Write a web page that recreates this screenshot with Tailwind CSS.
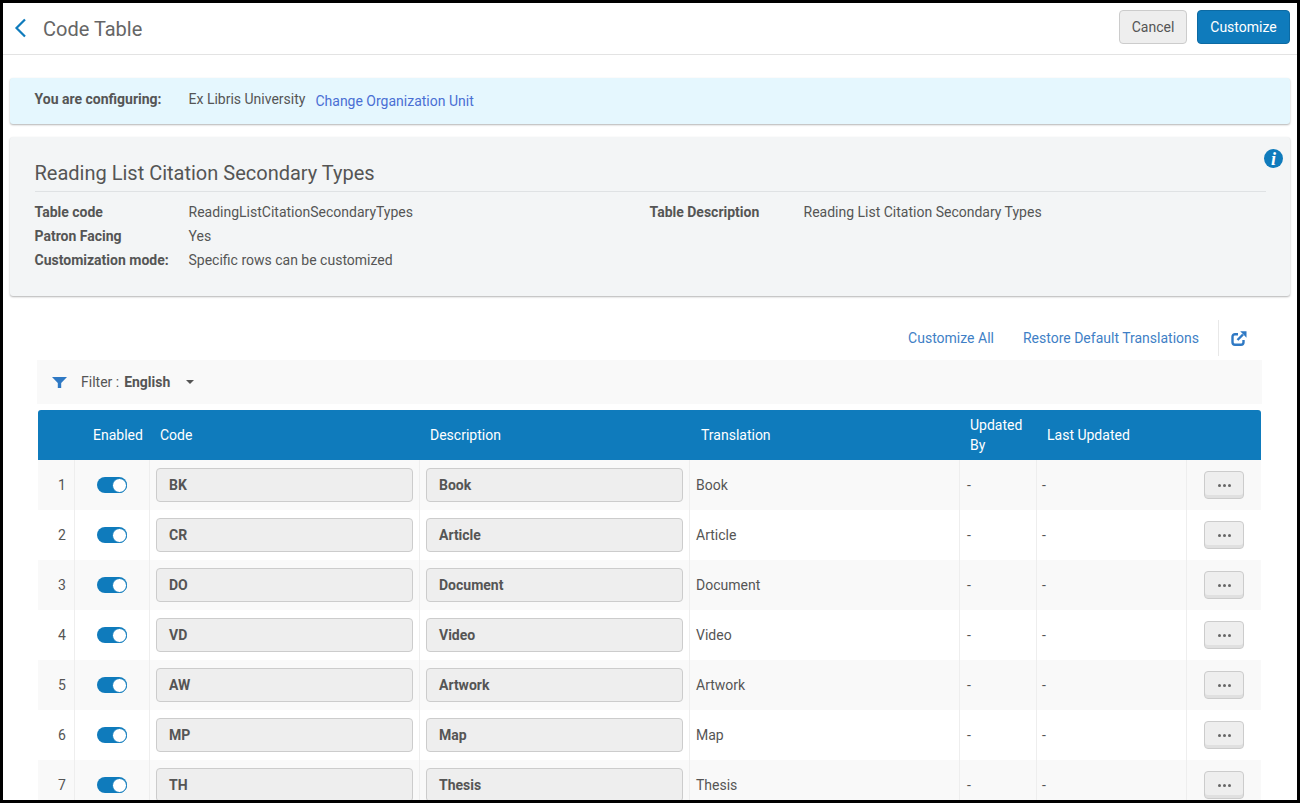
<!DOCTYPE html>
<html lang="en">
<head>
  <meta charset="UTF-8" />
  <title>Code Table</title>
  <script src="https://cdn.jsdelivr.net/npm/@tailwindcss/browser@4"></script>
</head>
<body class="bg-white font-['Roboto',sans-serif] text-[14px] text-[#555]">
  <div class="h-[803px] w-[1300px] overflow-hidden border-[3px] border-black bg-white">

    <!-- top bar -->
    <div class="flex h-[52px] items-center justify-between border-b border-[#e3e3e3] pr-[7px]">
      <div class="flex items-center">
        <svg class="-mt-[2px] ml-[11px] h-[20px] w-[14px]" viewBox="0 0 14 20" fill="none" stroke="#0f7bbc" stroke-width="2.2"><path d="M11 1.500 2.500 10 11 18.500"/></svg>
        <h1 class="ml-[15px] text-[20px] text-[#666]">Code Table</h1>
      </div>
      <div class="-mt-[3px] flex gap-[10px]">
        <button class="h-[34px] w-[68px] rounded-[4px] border border-[#ccc] bg-[#eee] text-[#555]">Cancel</button>
        <button class="h-[34px] w-[93px] rounded-[4px] border border-[#0c6aa3] bg-[#0f7bbc] text-white">Customize</button>
      </div>
    </div>

    <!-- org unit banner -->
    <div class="mx-[7px] mt-[23px] flex h-[46px] items-center rounded-[3px] bg-[#e5f7fe] pl-[24.5px] shadow-[0_1px_2px_rgba(0,0,0,0.3)]">
      <span class="-mt-[3px] w-[154px] font-bold">You are configuring:</span>
      <span class="-mt-[3px]">Ex Libris University</span>
      <a class="ml-[10px] text-[#4a6fd4]">Change Organization Unit</a>
    </div>

    <!-- table details -->
    <div class="relative mx-[7px] mt-[13px] h-[159px] rounded-[3px] bg-[#f3f5f6] px-[24.5px] shadow-[0_1px_2px_rgba(0,0,0,0.3)]">
      <span class="absolute right-[7px] top-[12px] flex h-[19px] w-[19px] items-center justify-center rounded-full bg-[#0f7bbc] font-['Liberation_Serif',serif] text-[18px] font-bold italic leading-none text-white">i</span>
      <h2 class="flex h-[55px] items-end border-b border-[#dfe2e4] pb-[4px] text-[20px] leading-[28px]">Reading List Citation Secondary Types</h2>
      <div class="mt-[8px] grid grid-cols-[154px_461px_154px_1fr] leading-[24px]">
        <span class="font-bold">Table code</span><span>ReadingListCitationSecondaryTypes</span>
        <span class="font-bold">Table Description</span><span>Reading List Citation Secondary Types</span>
        <span class="font-bold">Patron Facing</span><span class="col-span-3">Yes</span>
        <span class="font-bold">Customization mode:</span><span class="col-span-3">Specific rows can be customized</span>
      </div>
    </div>

    <!-- actions -->
    <div class="mt-[24px] flex h-[36px] items-center justify-end pr-[50px] text-[#3f7fc6]">
      <a>Customize All</a>
      <a class="ml-[29px]">Restore Default Translations</a>
      <span class="ml-[19px] h-[36px] border-l border-[#e8e8e8]"></span>
      <svg class="ml-[12px] h-[15px] w-[16px]" viewBox="0 0 16 15" fill="none" stroke="#2f79c4" stroke-width="2.400"><path d="M7 3.200H4A2.500 2.500 0 0 0 1.500 5.700v5.600A2.500 2.500 0 0 0 4 13.800h6a2.500 2.500 0 0 0 2.500-2.500V9"/><path d="M15.500 0.300V6.800L9.200 0.300z" fill="#2f79c4" stroke="none"/><path d="M12 3.500 6.500 9"/></svg>
    </div>

    <!-- filter -->
    <div class="mx-[34px] mt-[4px] flex h-[44px] w-[1225px] items-center bg-[#f9f9f9] pl-[15px]">
      <svg class="h-[11px] w-[15px]" viewBox="0 0 15 11" fill="#2f79c4"><path d="M0 0h15L9.200 6V11H5.800V6z"/></svg>
      <span class="ml-[14px]">Filter : <b class="ml-[1.500px]">English</b></span>
      <span class="ml-[16px] h-0 w-0 border-x-[4px] border-t-[4px] border-x-transparent border-t-[#555]"></span>
    </div>

    <!-- code table -->
    <div class="ml-[35px] mt-[6px] w-[1223px]">
      <div class="grid h-[50px] grid-cols-[37px_75px_270px_270px_270px_77px_150px_74px] items-center rounded-t-[3px] bg-[#0f7bbc] text-white">
        <span></span>
        <span class="pl-[18px]">Enabled</span>
        <span class="pl-[10px]">Code</span>
        <span class="pl-[10px]">Description</span>
        <span class="pl-[11px]">Translation</span>
        <span class="pl-[10px] leading-[20px]">Updated By</span>
        <span class="pl-[10px]">Last Updated</span>
        <span></span>
      </div>

      <div class="grid h-[50px] grid-cols-[37px_75px_270px_270px_270px_77px_150px_74px] items-stretch bg-[#f9f9f9]">
        <span class="flex items-center justify-center border-r border-[#eee] pl-[12px]">1</span>
        <span class="flex items-center justify-center border-r border-[#eee]"><span class="flex h-[16px] w-[30px] items-center justify-end rounded-full bg-[#0f7bbc]"><span class="box-content h-[13px] w-[13px] rounded-full border border-[#0f7bbc] bg-white"></span></span></span>
        <span class="flex items-center border-r border-[#eee] pl-[6px]"><span class="flex h-[34px] w-[257px] items-center rounded-[4px] border border-[#ccc] bg-[#eee] pl-[12px] font-bold">BK</span></span>
        <span class="flex items-center border-r border-[#eee] pl-[6px]"><span class="flex h-[34px] w-[257px] items-center rounded-[4px] border border-[#ccc] bg-[#eee] pl-[12px] font-bold">Book</span></span>
        <span class="flex items-center border-r border-[#eee] pl-[6px]">Book</span>
        <span class="flex items-center border-r border-[#eee] pl-[7px]">-</span>
        <span class="flex items-center border-r border-[#eee] pl-[5px]">-</span>
        <span class="flex items-center pl-[17px]"><button class="flex h-[28px] w-[40px] items-center justify-center gap-[2px] rounded-[4px] border border-[#ccc] bg-[#eee] pt-[1px] shadow-[inset_0_-3px_0_#e0e0e0]"><i class="h-[3px] w-[3px] rounded-full bg-[#666]"></i><i class="h-[3px] w-[3px] rounded-full bg-[#666]"></i><i class="h-[3px] w-[3px] rounded-full bg-[#666]"></i></button></span>
      </div>

      <div class="grid h-[50px] grid-cols-[37px_75px_270px_270px_270px_77px_150px_74px] items-stretch bg-white">
        <span class="flex items-center justify-center border-r border-[#eee] pl-[12px]">2</span>
        <span class="flex items-center justify-center border-r border-[#eee]"><span class="flex h-[16px] w-[30px] items-center justify-end rounded-full bg-[#0f7bbc]"><span class="box-content h-[13px] w-[13px] rounded-full border border-[#0f7bbc] bg-white"></span></span></span>
        <span class="flex items-center border-r border-[#eee] pl-[6px]"><span class="flex h-[34px] w-[257px] items-center rounded-[4px] border border-[#ccc] bg-[#eee] pl-[12px] font-bold">CR</span></span>
        <span class="flex items-center border-r border-[#eee] pl-[6px]"><span class="flex h-[34px] w-[257px] items-center rounded-[4px] border border-[#ccc] bg-[#eee] pl-[12px] font-bold">Article</span></span>
        <span class="flex items-center border-r border-[#eee] pl-[6px]">Article</span>
        <span class="flex items-center border-r border-[#eee] pl-[7px]">-</span>
        <span class="flex items-center border-r border-[#eee] pl-[5px]">-</span>
        <span class="flex items-center pl-[17px]"><button class="flex h-[28px] w-[40px] items-center justify-center gap-[2px] rounded-[4px] border border-[#ccc] bg-[#eee] pt-[1px] shadow-[inset_0_-3px_0_#e0e0e0]"><i class="h-[3px] w-[3px] rounded-full bg-[#666]"></i><i class="h-[3px] w-[3px] rounded-full bg-[#666]"></i><i class="h-[3px] w-[3px] rounded-full bg-[#666]"></i></button></span>
      </div>

      <div class="grid h-[50px] grid-cols-[37px_75px_270px_270px_270px_77px_150px_74px] items-stretch bg-[#f9f9f9]">
        <span class="flex items-center justify-center border-r border-[#eee] pl-[12px]">3</span>
        <span class="flex items-center justify-center border-r border-[#eee]"><span class="flex h-[16px] w-[30px] items-center justify-end rounded-full bg-[#0f7bbc]"><span class="box-content h-[13px] w-[13px] rounded-full border border-[#0f7bbc] bg-white"></span></span></span>
        <span class="flex items-center border-r border-[#eee] pl-[6px]"><span class="flex h-[34px] w-[257px] items-center rounded-[4px] border border-[#ccc] bg-[#eee] pl-[12px] font-bold">DO</span></span>
        <span class="flex items-center border-r border-[#eee] pl-[6px]"><span class="flex h-[34px] w-[257px] items-center rounded-[4px] border border-[#ccc] bg-[#eee] pl-[12px] font-bold">Document</span></span>
        <span class="flex items-center border-r border-[#eee] pl-[6px]">Document</span>
        <span class="flex items-center border-r border-[#eee] pl-[7px]">-</span>
        <span class="flex items-center border-r border-[#eee] pl-[5px]">-</span>
        <span class="flex items-center pl-[17px]"><button class="flex h-[28px] w-[40px] items-center justify-center gap-[2px] rounded-[4px] border border-[#ccc] bg-[#eee] pt-[1px] shadow-[inset_0_-3px_0_#e0e0e0]"><i class="h-[3px] w-[3px] rounded-full bg-[#666]"></i><i class="h-[3px] w-[3px] rounded-full bg-[#666]"></i><i class="h-[3px] w-[3px] rounded-full bg-[#666]"></i></button></span>
      </div>

      <div class="grid h-[50px] grid-cols-[37px_75px_270px_270px_270px_77px_150px_74px] items-stretch bg-white">
        <span class="flex items-center justify-center border-r border-[#eee] pl-[12px]">4</span>
        <span class="flex items-center justify-center border-r border-[#eee]"><span class="flex h-[16px] w-[30px] items-center justify-end rounded-full bg-[#0f7bbc]"><span class="box-content h-[13px] w-[13px] rounded-full border border-[#0f7bbc] bg-white"></span></span></span>
        <span class="flex items-center border-r border-[#eee] pl-[6px]"><span class="flex h-[34px] w-[257px] items-center rounded-[4px] border border-[#ccc] bg-[#eee] pl-[12px] font-bold">VD</span></span>
        <span class="flex items-center border-r border-[#eee] pl-[6px]"><span class="flex h-[34px] w-[257px] items-center rounded-[4px] border border-[#ccc] bg-[#eee] pl-[12px] font-bold">Video</span></span>
        <span class="flex items-center border-r border-[#eee] pl-[6px]">Video</span>
        <span class="flex items-center border-r border-[#eee] pl-[7px]">-</span>
        <span class="flex items-center border-r border-[#eee] pl-[5px]">-</span>
        <span class="flex items-center pl-[17px]"><button class="flex h-[28px] w-[40px] items-center justify-center gap-[2px] rounded-[4px] border border-[#ccc] bg-[#eee] pt-[1px] shadow-[inset_0_-3px_0_#e0e0e0]"><i class="h-[3px] w-[3px] rounded-full bg-[#666]"></i><i class="h-[3px] w-[3px] rounded-full bg-[#666]"></i><i class="h-[3px] w-[3px] rounded-full bg-[#666]"></i></button></span>
      </div>

      <div class="grid h-[50px] grid-cols-[37px_75px_270px_270px_270px_77px_150px_74px] items-stretch bg-[#f9f9f9]">
        <span class="flex items-center justify-center border-r border-[#eee] pl-[12px]">5</span>
        <span class="flex items-center justify-center border-r border-[#eee]"><span class="flex h-[16px] w-[30px] items-center justify-end rounded-full bg-[#0f7bbc]"><span class="box-content h-[13px] w-[13px] rounded-full border border-[#0f7bbc] bg-white"></span></span></span>
        <span class="flex items-center border-r border-[#eee] pl-[6px]"><span class="flex h-[34px] w-[257px] items-center rounded-[4px] border border-[#ccc] bg-[#eee] pl-[12px] font-bold">AW</span></span>
        <span class="flex items-center border-r border-[#eee] pl-[6px]"><span class="flex h-[34px] w-[257px] items-center rounded-[4px] border border-[#ccc] bg-[#eee] pl-[12px] font-bold">Artwork</span></span>
        <span class="flex items-center border-r border-[#eee] pl-[6px]">Artwork</span>
        <span class="flex items-center border-r border-[#eee] pl-[7px]">-</span>
        <span class="flex items-center border-r border-[#eee] pl-[5px]">-</span>
        <span class="flex items-center pl-[17px]"><button class="flex h-[28px] w-[40px] items-center justify-center gap-[2px] rounded-[4px] border border-[#ccc] bg-[#eee] pt-[1px] shadow-[inset_0_-3px_0_#e0e0e0]"><i class="h-[3px] w-[3px] rounded-full bg-[#666]"></i><i class="h-[3px] w-[3px] rounded-full bg-[#666]"></i><i class="h-[3px] w-[3px] rounded-full bg-[#666]"></i></button></span>
      </div>

      <div class="grid h-[50px] grid-cols-[37px_75px_270px_270px_270px_77px_150px_74px] items-stretch bg-white">
        <span class="flex items-center justify-center border-r border-[#eee] pl-[12px]">6</span>
        <span class="flex items-center justify-center border-r border-[#eee]"><span class="flex h-[16px] w-[30px] items-center justify-end rounded-full bg-[#0f7bbc]"><span class="box-content h-[13px] w-[13px] rounded-full border border-[#0f7bbc] bg-white"></span></span></span>
        <span class="flex items-center border-r border-[#eee] pl-[6px]"><span class="flex h-[34px] w-[257px] items-center rounded-[4px] border border-[#ccc] bg-[#eee] pl-[12px] font-bold">MP</span></span>
        <span class="flex items-center border-r border-[#eee] pl-[6px]"><span class="flex h-[34px] w-[257px] items-center rounded-[4px] border border-[#ccc] bg-[#eee] pl-[12px] font-bold">Map</span></span>
        <span class="flex items-center border-r border-[#eee] pl-[6px]">Map</span>
        <span class="flex items-center border-r border-[#eee] pl-[7px]">-</span>
        <span class="flex items-center border-r border-[#eee] pl-[5px]">-</span>
        <span class="flex items-center pl-[17px]"><button class="flex h-[28px] w-[40px] items-center justify-center gap-[2px] rounded-[4px] border border-[#ccc] bg-[#eee] pt-[1px] shadow-[inset_0_-3px_0_#e0e0e0]"><i class="h-[3px] w-[3px] rounded-full bg-[#666]"></i><i class="h-[3px] w-[3px] rounded-full bg-[#666]"></i><i class="h-[3px] w-[3px] rounded-full bg-[#666]"></i></button></span>
      </div>

      <div class="grid h-[50px] grid-cols-[37px_75px_270px_270px_270px_77px_150px_74px] items-stretch bg-[#f9f9f9]">
        <span class="flex items-center justify-center border-r border-[#eee] pl-[12px]">7</span>
        <span class="flex items-center justify-center border-r border-[#eee]"><span class="flex h-[16px] w-[30px] items-center justify-end rounded-full bg-[#0f7bbc]"><span class="box-content h-[13px] w-[13px] rounded-full border border-[#0f7bbc] bg-white"></span></span></span>
        <span class="flex items-center border-r border-[#eee] pl-[6px]"><span class="flex h-[34px] w-[257px] items-center rounded-[4px] border border-[#ccc] bg-[#eee] pl-[12px] font-bold">TH</span></span>
        <span class="flex items-center border-r border-[#eee] pl-[6px]"><span class="flex h-[34px] w-[257px] items-center rounded-[4px] border border-[#ccc] bg-[#eee] pl-[12px] font-bold">Thesis</span></span>
        <span class="flex items-center border-r border-[#eee] pl-[6px]">Thesis</span>
        <span class="flex items-center border-r border-[#eee] pl-[7px]">-</span>
        <span class="flex items-center border-r border-[#eee] pl-[5px]">-</span>
        <span class="flex items-center pl-[17px]"><button class="flex h-[28px] w-[40px] items-center justify-center gap-[2px] rounded-[4px] border border-[#ccc] bg-[#eee] pt-[1px] shadow-[inset_0_-3px_0_#e0e0e0]"><i class="h-[3px] w-[3px] rounded-full bg-[#666]"></i><i class="h-[3px] w-[3px] rounded-full bg-[#666]"></i><i class="h-[3px] w-[3px] rounded-full bg-[#666]"></i></button></span>
      </div>
    </div>
  </div>
</body>
</html>
